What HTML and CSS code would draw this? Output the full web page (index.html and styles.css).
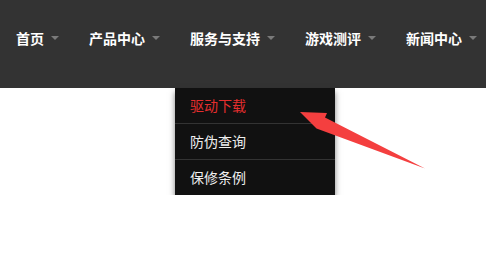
FILE: index.html
```html
<!DOCTYPE html>
<html lang="zh-CN">
<head>
<meta charset="UTF-8">
<title>导航</title>
<link rel="stylesheet" href="styles.css">
</head>
<body>
<div class="header">
  <ul class="nav">
    <li class="nav-item"><a href="#">首页</a><span class="caret"></span></li>
    <li class="nav-item"><a href="#">产品中心</a><span class="caret"></span></li>
    <li class="nav-item"><a href="#">服务与支持</a><span class="caret"></span></li>
    <li class="nav-item"><a href="#">游戏测评</a><span class="caret"></span></li>
    <li class="nav-item"><a href="#">新闻中心</a><span class="caret"></span></li>
  </ul>
</div>

<!-- submenu of 服务与支持, shown open -->
<div class="submenu">
  <a class="sub-link current" href="#">驱动下载</a>
  <a class="sub-link" href="#">防伪查询</a>
  <a class="sub-link" href="#">保修条例</a>
</div>

<!-- annotation arrow pointing at the active menu item -->
<svg class="pointer" width="486" height="271" viewBox="0 0 486 271">
  <polygon points="300,112 327,113 325,117.5 425,168.5 316.5,128.5" fill="#f43f3f"/>
</svg>
</body>
</html>
```

FILE: styles.css
```css
body, html {
  margin: 0;
  padding: 0;
  background: #fff;
  font-family: "Noto Sans CJK SC", "Microsoft YaHei", sans-serif;
}

.header {
  height: 88px;
  background: #333;
  box-sizing: border-box;
  padding-top: 28px;
}

.nav {
  list-style: none;
  margin: 0;
  padding: 0 0 0 1px;
  display: flex;
  white-space: nowrap;
}

.nav-item {
  display: flex;
  align-items: center;
  padding: 0 15px;
  height: 20px;
}

.nav-item > a {
  color: #fff;
  font-size: 14px;
  font-weight: bold;
  line-height: 20px;
  text-decoration: none;
}

.caret {
  width: 0;
  height: 0;
  margin-left: 7px;
  border-left: 4px solid transparent;
  border-right: 4px solid transparent;
  border-top: 4px solid #7a7a7a;
}

.submenu {
  margin-left: 175px;
  width: 160px;
  display: flex;
  flex-direction: column;
  background: #111;
  box-shadow: 0 4px 6px rgba(0, 0, 0, 0.5);
}

.sub-link {
  height: 35px;
  line-height: 35px;
  padding-left: 15px;
  border-top: 1px solid #333;
  color: #eee;
  font-size: 14px;
  text-decoration: none;
}

.sub-link:first-child {
  border-top: 0;
}

.sub-link.current {
  color: #e52e2e;
}

.pointer {
  position: absolute;
  left: 0;
  top: 0;
  pointer-events: none;
}
```
